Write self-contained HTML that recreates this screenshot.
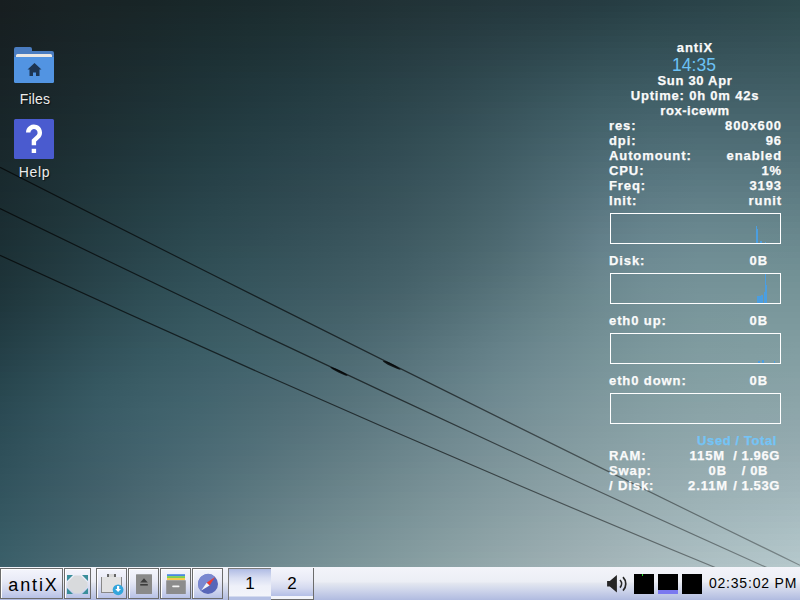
<!DOCTYPE html>
<html><head><meta charset="utf-8">
<style>
*{margin:0;padding:0;box-sizing:border-box}
html,body{width:800px;height:600px;overflow:hidden;background:#3a5560}
body{position:relative;font-family:"Liberation Sans",sans-serif}
#bg i{position:absolute;left:0;width:800px;height:6px;display:block}
.a{position:absolute}
.ck{position:absolute;color:#fafafa;-webkit-text-stroke:0.25px #fafafa;font-weight:bold;font-size:13px;letter-spacing:0.9px;line-height:15px;white-space:pre}
.r{text-align:right}
.c{text-align:center}
.gbox{position:absolute;left:610px;width:171px;height:31px;border:1px solid #fff}
.bar{position:absolute;background:#4b9ee0}
.dlabel{position:absolute;width:70px;text-align:center;color:#ececec;font-size:14px;letter-spacing:0.2px;line-height:16px;text-shadow:1px 1px 1px rgba(0,0,0,.6)}
#tb{position:absolute;left:0;top:567px;width:800px;height:33px;background:linear-gradient(180deg,#f3f4fa 0,#eceef5 15px,#e4e7f0 16px,#ccd3ea 24px,#b0bbe0 33px)}
.btn{position:absolute;top:1px;height:31px;border:1px solid #6c6c6c;box-shadow:inset 1px 1px 0 #fff;background:linear-gradient(180deg,#f4f5fc 0,#e8eaf6 12px,#d4d9ef 20px,#b4bfe6 30px)}
.ws{position:absolute;top:1px;height:32px;font-size:17px;line-height:20px;text-align:center;color:#000}
</style></head><body>
<div id="bg">
<i style="top:0px;background:linear-gradient(90deg,#171e20 0px,#182123 50px,#182325 100px,#182527 150px,#19282a 200px,#1a2a2d 250px,#1c2d30 300px,#1f2f33 350px,#213236 400px,#223439 450px,#24373c 500px,#25393f 550px,#263c42 600px,#284046 650px,#2a4349 700px,#2c464b 750px,#2e4a4e 800px)"></i>
<i style="top:6px;background:linear-gradient(90deg,#171e20 0px,#182123 50px,#182426 100px,#192628 150px,#19292b 200px,#1b2b2e 250px,#1d2e31 300px,#1f3034 350px,#213337 400px,#23363a 450px,#25383e 500px,#263b41 550px,#273e44 600px,#294248 650px,#2c454b 700px,#2e484d 750px,#2f4b4f 800px)"></i>
<i style="top:12px;background:linear-gradient(90deg,#171e21 0px,#182224 50px,#192426 100px,#192729 150px,#1a292c 200px,#1b2c2f 250px,#1d2f32 300px,#203135 350px,#223438 400px,#24373c 450px,#253a3f 500px,#273c42 550px,#284046 600px,#2b444a 650px,#2d474d 700px,#2f494f 750px,#304d51 800px)"></i>
<i style="top:18px;background:linear-gradient(90deg,#171f21 0px,#182224 50px,#192527 100px,#19272a 150px,#1a2a2d 200px,#1b2d30 250px,#1e3033 300px,#203236 350px,#23353a 400px,#25383d 450px,#263b41 500px,#283e44 550px,#2a4248 600px,#2c464c 650px,#2e484f 700px,#304b50 750px,#324e53 800px)"></i>
<i style="top:24px;background:linear-gradient(90deg,#171f22 0px,#182225 50px,#192528 100px,#19282b 150px,#1a2b2e 200px,#1c2e31 250px,#1e3134 300px,#213338 350px,#23363b 400px,#26393f 450px,#273d43 500px,#294046 550px,#2b444a 600px,#2e484e 650px,#304a51 700px,#324c52 750px,#334f54 800px)"></i>
<i style="top:30px;background:linear-gradient(90deg,#172022 0px,#182326 50px,#192628 100px,#1a292b 150px,#1b2c2f 200px,#1c2f32 250px,#1e3235 300px,#213439 350px,#24383c 400px,#263b40 450px,#293e44 500px,#2b4248 550px,#2d464c 600px,#2f4a50 650px,#314c52 700px,#334e54 750px,#345156 800px)"></i>
<i style="top:36px;background:linear-gradient(90deg,#172023 0px,#192326 50px,#192629 100px,#1a292c 150px,#1b2d30 200px,#1d3033 250px,#1f3337 300px,#22363a 350px,#25393e 400px,#273c42 450px,#2a4046 500px,#2c444a 550px,#2e484f 600px,#314c52 650px,#334e54 700px,#344f56 750px,#365258 800px)"></i>
<i style="top:42px;background:linear-gradient(90deg,#172023 0px,#192427 50px,#1a272a 100px,#1a2a2d 150px,#1b2d31 200px,#1d3034 250px,#1f3338 300px,#22373b 350px,#253a3f 400px,#283d43 450px,#2b4148 500px,#2d464c 550px,#304a51 600px,#324e54 650px,#345056 700px,#365158 750px,#375459 800px)"></i>
<i style="top:48px;background:linear-gradient(90deg,#172124 0px,#192427 50px,#1a272b 100px,#1b2b2e 150px,#1c2e32 200px,#1d3135 250px,#203439 300px,#23383d 350px,#263b40 400px,#293f45 450px,#2c4349 500px,#2e474e 550px,#314c53 600px,#345057 650px,#365158 700px,#37535a 750px,#38555b 800px)"></i>
<i style="top:54px;background:linear-gradient(90deg,#172124 0px,#192528 50px,#1a282b 100px,#1b2b2f 150px,#1c2f33 200px,#1e3236 250px,#20353a 300px,#23393e 350px,#273c42 400px,#2a4046 450px,#2d444b 500px,#304950 550px,#334e55 600px,#355159 650px,#37535a 700px,#39555c 750px,#3a575d 800px)"></i>
<i style="top:60px;background:linear-gradient(90deg,#172124 0px,#192528 50px,#1a292c 100px,#1b2c30 150px,#1c3034 200px,#1e3337 250px,#21363b 300px,#243a3f 350px,#273d43 400px,#2b4148 450px,#2e464d 500px,#314b52 550px,#345057 600px,#37535b 650px,#39555c 700px,#3a565d 750px,#3b585e 800px)"></i>
<i style="top:66px;background:linear-gradient(90deg,#172225 0px,#192629 50px,#1b292d 100px,#1c2d30 150px,#1d3135 200px,#1f3438 250px,#21373c 300px,#243b40 350px,#283e44 400px,#2b4349 450px,#2f484e 500px,#324d54 550px,#365259 600px,#38555d 650px,#3a575e 700px,#3c585f 750px,#3c5a60 800px)"></i>
<i style="top:72px;background:linear-gradient(90deg,#172225 0px,#192629 50px,#1b2a2d 100px,#1c2e31 150px,#1d3136 200px,#1f353a 250px,#22383d 300px,#253c41 350px,#293f46 400px,#2c444a 450px,#304950 500px,#344f56 550px,#37545b 600px,#3a575f 650px,#3c5960 700px,#3d5a61 750px,#3e5b62 800px)"></i>
<i style="top:78px;background:linear-gradient(90deg,#182326 0px,#1a272a 50px,#1b2a2e 100px,#1c2e32 150px,#1e3237 200px,#20363b 250px,#22393f 300px,#263d42 350px,#294147 400px,#2d454c 450px,#314b52 500px,#355058 550px,#39565d 600px,#3c5961 650px,#3e5b62 700px,#3f5b63 750px,#3f5d63 800px)"></i>
<i style="top:84px;background:linear-gradient(90deg,#182326 0px,#1a272b 50px,#1b2b2f 100px,#1d2f33 150px,#1e3337 200px,#20373c 250px,#233a40 300px,#263e44 350px,#2a4248 400px,#2e464d 450px,#324c53 500px,#37525a 550px,#3b5860 600px,#3d5b63 650px,#3f5c64 700px,#405d65 750px,#415e65 800px)"></i>
<i style="top:90px;background:linear-gradient(90deg,#182327 0px,#1a272b 50px,#1c2b2f 100px,#1d3034 150px,#1f3438 200px,#21373d 250px,#233b41 300px,#273f45 350px,#2b4349 400px,#2f484f 450px,#334e55 500px,#38545b 550px,#3c5a62 600px,#3f5d65 650px,#415e66 700px,#425f67 750px,#426067 800px)"></i>
<i style="top:96px;background:linear-gradient(90deg,#182427 0px,#1a282c 50px,#1c2c30 100px,#1d3035 150px,#1f3539 200px,#21383e 250px,#243c42 300px,#284046 350px,#2c444a 400px,#304950 450px,#344f56 500px,#39565d 550px,#3e5c64 600px,#415f67 650px,#436068 700px,#436169 750px,#446168 800px)"></i>
<i style="top:102px;background:linear-gradient(90deg,#182428 0px,#1a282c 50px,#1c2d31 100px,#1e3136 150px,#1f353a 200px,#22393f 250px,#253d43 300px,#284047 350px,#2c454c 400px,#314a51 450px,#365058 500px,#3b575f 550px,#3f5d65 600px,#426169 650px,#44626a 700px,#45626a 750px,#45636a 800px)"></i>
<i style="top:108px;background:linear-gradient(90deg,#182528 0px,#1a292d 50px,#1c2d31 100px,#1e3237 150px,#20363b 200px,#223a40 250px,#253e44 300px,#294148 350px,#2d464d 400px,#324b52 450px,#375259 500px,#3c5961 550px,#415f67 600px,#44626b 650px,#46646c 700px,#46646c 750px,#47646c 800px)"></i>
<i style="top:114px;background:linear-gradient(90deg,#182529 0px,#1b2a2d 50px,#1d2e32 100px,#1e3337 150px,#20373c 200px,#233b41 250px,#263e45 300px,#2a4249 350px,#2e474e 400px,#324c54 450px,#38535b 500px,#3d5a62 550px,#426169 600px,#46646d 650px,#48666e 700px,#48666e 750px,#48666d 800px)"></i>
<i style="top:120px;background:linear-gradient(90deg,#182629 0px,#1b2a2e 50px,#1d2f33 100px,#1f3438 150px,#21383d 200px,#233c42 250px,#263f46 300px,#2a434a 350px,#2f484f 400px,#334d55 450px,#39545c 500px,#3f5c64 550px,#44626b 600px,#48666f 650px,#496770 700px,#4a6770 750px,#4a676f 800px)"></i>
<i style="top:126px;background:linear-gradient(90deg,#18262a 0px,#1b2b2f 50px,#1d2f34 100px,#1f3439 150px,#21393e 200px,#243d43 250px,#274047 300px,#2b444b 350px,#2f4950 400px,#344f56 450px,#3a555d 500px,#405d65 550px,#45646c 600px,#496870 650px,#4b6972 700px,#4b6972 750px,#4b6971 800px)"></i>
<i style="top:132px;background:linear-gradient(90deg,#18262a 0px,#1b2b2f 50px,#1e3035 100px,#20353a 150px,#223a3f 200px,#253e44 250px,#284148 300px,#2c454c 350px,#304a51 400px,#355057 450px,#3b575e 500px,#415e67 550px,#47656e 600px,#4b6a72 650px,#4d6b74 700px,#4d6b73 750px,#4d6b72 800px)"></i>
<i style="top:138px;background:linear-gradient(90deg,#19272b 0px,#1b2c30 50px,#1e3135 100px,#20363b 150px,#223b40 200px,#253e45 250px,#294249 300px,#2c464d 350px,#314b52 400px,#365158 450px,#3c5860 500px,#436068 550px,#496770 600px,#4d6b74 650px,#4f6d76 700px,#4f6d75 750px,#4e6c74 800px)"></i>
<i style="top:144px;background:linear-gradient(90deg,#19272b 0px,#1c2c31 50px,#1e3136 100px,#20373c 150px,#233c41 200px,#263f46 250px,#29434a 300px,#2d474e 350px,#324c53 400px,#375259 450px,#3d5961 500px,#44616a 550px,#4a6871 600px,#4e6d76 650px,#506f77 700px,#506e77 750px,#506e76 800px)"></i>
<i style="top:150px;background:linear-gradient(90deg,#19282c 0px,#1c2d31 50px,#1e3237 100px,#21373d 150px,#233c42 200px,#264047 250px,#2a444b 300px,#2e484f 350px,#324c54 400px,#38535a 450px,#3e5a62 500px,#45626b 550px,#4c6a73 600px,#506f78 650px,#527179 700px,#527079 750px,#517077 800px)"></i>
<i style="top:156px;background:linear-gradient(90deg,#19282c 0px,#1c2e32 50px,#1f3338 100px,#21383e 150px,#243d43 200px,#274148 250px,#2b444c 300px,#2f4850 350px,#334d55 400px,#39545b 450px,#3f5b63 500px,#47646c 550px,#4d6b75 600px,#52707a 650px,#54727b 700px,#54727a 750px,#537179 800px)"></i>
<i style="top:162px;background:linear-gradient(90deg,#19292d 0px,#1c2e33 50px,#1f3439 100px,#22393f 150px,#243e44 200px,#284249 250px,#2c454d 300px,#2f4951 350px,#344e56 400px,#39555c 450px,#405c64 500px,#48656e 550px,#4f6d76 600px,#54727b 650px,#56747d 700px,#56747c 750px,#55737b 800px)"></i>
<i style="top:168px;background:linear-gradient(90deg,#19292d 0px,#1c2f33 50px,#1f3439 100px,#223a40 150px,#253f45 200px,#28434a 250px,#2c464e 300px,#304a52 350px,#354f57 400px,#3a555d 450px,#415d65 500px,#49666f 550px,#516e78 600px,#56747d 650px,#58767f 700px,#57767e 750px,#57757c 800px)"></i>
<i style="top:174px;background:linear-gradient(90deg,#192a2e 0px,#1d2f34 50px,#20353a 100px,#233b40 150px,#264046 200px,#29434b 250px,#2d474e 300px,#314b53 350px,#365058 400px,#3b565e 450px,#425e66 500px,#4a6770 550px,#527079 600px,#57767f 650px,#597881 700px,#597880 750px,#58777e 800px)"></i>
<i style="top:180px;background:linear-gradient(90deg,#192a2e 0px,#1d3035 50px,#20363b 100px,#233b41 150px,#264047 200px,#2a444b 250px,#2e484f 300px,#324c54 350px,#365159 400px,#3c575f 450px,#435f67 500px,#4c6972 550px,#54717b 600px,#597781 650px,#5b7a82 700px,#5b7981 750px,#5a7880 800px)"></i>
<i style="top:186px;background:linear-gradient(90deg,#192a2f 0px,#1d3035 50px,#21373c 100px,#243c42 150px,#274148 200px,#2b454c 250px,#2f4850 300px,#334d54 350px,#375259 400px,#3d5860 450px,#446068 500px,#4d6a73 550px,#55737d 600px,#5b7982 650px,#5d7b84 700px,#5d7b83 750px,#5c7a82 800px)"></i>
<i style="top:192px;background:linear-gradient(90deg,#1a2b2f 0px,#1d3136 50px,#21373d 100px,#243d43 150px,#284249 200px,#2b464d 250px,#2f4951 300px,#334d55 350px,#38535a 400px,#3e5961 450px,#456169 500px,#4e6b74 550px,#57747e 600px,#5d7b84 650px,#5f7d86 700px,#5f7d85 750px,#5e7c83 800px)"></i>
<i style="top:198px;background:linear-gradient(90deg,#1a2b30 0px,#1e3237 50px,#21383e 100px,#253e44 150px,#28434a 200px,#2c474e 250px,#304a52 300px,#344e56 350px,#39535b 400px,#3f5a62 450px,#46626a 500px,#506c75 550px,#597680 600px,#5f7c86 650px,#617f87 700px,#607f86 750px,#5f7e85 800px)"></i>
<i style="top:204px;background:linear-gradient(90deg,#1a2c30 0px,#1e3237 50px,#22393e 100px,#253f45 150px,#29444b 200px,#2d484f 250px,#314b53 300px,#354f57 350px,#3a545c 400px,#405b63 450px,#47636b 500px,#516d77 550px,#5a7781 600px,#607e87 650px,#638189 700px,#628188 750px,#618086 800px)"></i>
<i style="top:210px;background:linear-gradient(90deg,#1a2c31 0px,#1e3338 50px,#223a3f 100px,#264046 150px,#29454c 200px,#2d4950 250px,#314c54 300px,#365058 350px,#3a555d 400px,#405c63 450px,#48646c 500px,#526f78 550px,#5c7983 600px,#628089 650px,#64838b 700px,#64828a 750px,#638188 800px)"></i>
<i style="top:216px;background:linear-gradient(90deg,#1a2d32 0px,#1f3439 50px,#233a40 100px,#264147 150px,#2a464d 200px,#2e4a51 250px,#324d55 300px,#365159 350px,#3b565e 400px,#415d64 450px,#49656d 500px,#537079 550px,#5e7a84 600px,#64818a 650px,#66848c 700px,#66848b 750px,#648389 800px)"></i>
<i style="top:222px;background:linear-gradient(90deg,#1b2d32 0px,#1f3439 50px,#233b41 100px,#274148 150px,#2b474e 200px,#2f4a52 250px,#334e56 300px,#37525a 350px,#3c575f 400px,#425e65 450px,#4a666e 500px,#55717a 550px,#5f7c86 600px,#65838c 650px,#68868e 700px,#67868d 750px,#66858b 800px)"></i>
<i style="top:228px;background:linear-gradient(90deg,#1b2e33 0px,#1f353a 50px,#233c42 100px,#284249 150px,#2b484f 200px,#2f4b53 250px,#344f57 300px,#38535b 350px,#3d5860 400px,#435f66 450px,#4b676f 500px,#56727b 550px,#617d87 600px,#67848d 650px,#69878f 700px,#69878e 750px,#68868c 800px)"></i>
<i style="top:234px;background:linear-gradient(90deg,#1b2e33 0px,#20363b 50px,#243d43 100px,#28434a 150px,#2c4950 200px,#304c54 250px,#345058 300px,#39545c 350px,#3e5961 400px,#446067 450px,#4c6870 500px,#57737c 550px,#627f89 600px,#68868f 650px,#6b8990 700px,#6a898f 750px,#69888e 800px)"></i>
<i style="top:240px;background:linear-gradient(90deg,#1b2f34 0px,#20363c 50px,#243e44 100px,#29444b 150px,#2d4a51 200px,#314d55 250px,#355159 300px,#39555d 350px,#3f5a62 400px,#456168 450px,#4d6971 500px,#58747d 550px,#64808a 600px,#6a8790 650px,#6c8a91 700px,#6c8a91 750px,#6b898f 800px)"></i>
<i style="top:246px;background:linear-gradient(90deg,#1b3035 0px,#20373d 50px,#253e45 100px,#29454c 150px,#2e4b52 200px,#324f56 250px,#36525a 300px,#3a565e 350px,#3f5b63 400px,#466269 450px,#4e6a72 500px,#59757e 550px,#65818b 600px,#6b8891 650px,#6e8b93 700px,#6d8c92 750px,#6c8b90 800px)"></i>
<i style="top:252px;background:linear-gradient(90deg,#1c3035 0px,#21383d 50px,#263f46 100px,#2a464d 150px,#2e4c53 200px,#325057 250px,#37535b 300px,#3b575f 350px,#405c64 400px,#47636b 450px,#506c73 500px,#5b777f 550px,#66838c 600px,#6c8992 650px,#6f8d94 700px,#6f8d93 750px,#6e8c92 800px)"></i>
<i style="top:258px;background:linear-gradient(90deg,#1c3136 0px,#21383e 50px,#264047 100px,#2b474e 150px,#2f4d54 200px,#335159 250px,#37545c 300px,#3c5860 350px,#415d65 400px,#48646c 450px,#516d74 500px,#5c7880 550px,#68848d 600px,#6e8b93 650px,#708e95 700px,#708e94 750px,#6f8e93 800px)"></i>
<i style="top:264px;background:linear-gradient(90deg,#1c3137 0px,#22393f 50px,#274148 100px,#2b484f 150px,#304e55 200px,#34525a 250px,#38555d 300px,#3d5961 350px,#425e66 400px,#49656d 450px,#526e76 500px,#5d7981 550px,#69858d 600px,#6f8c94 650px,#718f96 700px,#719095 750px,#718f94 800px)"></i>
<i style="top:270px;background:linear-gradient(90deg,#1d3237 0px,#223a40 50px,#274249 100px,#2c4951 150px,#304f57 200px,#35535b 250px,#39565e 300px,#3e5a62 350px,#435f67 400px,#4b666e 450px,#536f77 500px,#5e7a82 550px,#6a868e 600px,#708d94 650px,#729096 700px,#739196 750px,#729195 800px)"></i>
<i style="top:276px;background:linear-gradient(90deg,#1d3338 0px,#233b41 50px,#28434a 100px,#2d4a52 150px,#315058 200px,#36545c 250px,#3a575f 300px,#3f5b63 350px,#446068 400px,#4c686f 450px,#557178 500px,#607c83 550px,#6b878f 600px,#718e95 650px,#749197 700px,#749297 750px,#739296 800px)"></i>
<i style="top:282px;background:linear-gradient(90deg,#1d3339 0px,#233c42 50px,#29444b 100px,#2d4c53 150px,#325159 200px,#36555d 250px,#3b5860 300px,#3f5c64 350px,#456169 400px,#4d6971 450px,#56727a 500px,#617d84 550px,#6c888f 600px,#728f96 650px,#759298 700px,#759398 750px,#759397 800px)"></i>
<i style="top:288px;background:linear-gradient(90deg,#1e343a 0px,#243d43 50px,#29454c 100px,#2e4d54 150px,#33525a 200px,#37565e 250px,#3c5962 300px,#405d65 350px,#46626a 400px,#4e6a72 450px,#58747b 500px,#627e85 550px,#6c8990 600px,#739096 650px,#769399 700px,#769499 750px,#769498 800px)"></i>
<i style="top:294px;background:linear-gradient(90deg,#1e353b 0px,#243e44 50px,#2a464e 100px,#2f4e55 150px,#34535b 200px,#38575f 250px,#3d5a63 300px,#425e66 350px,#48636b 400px,#506c73 450px,#59757d 500px,#648086 550px,#6d8a90 600px,#749097 650px,#77949a 700px,#78959a 750px,#779599 800px)"></i>
<i style="top:300px;background:linear-gradient(90deg,#1f363c 0px,#253f45 50px,#2b474f 100px,#304f57 150px,#34545d 200px,#395861 250px,#3e5c64 300px,#435f68 350px,#49656d 400px,#516d75 450px,#5b777e 500px,#658187 550px,#6e8b91 600px,#759197 650px,#78959a 700px,#79969b 750px,#79969a 800px)"></i>
<i style="top:306px;background:linear-gradient(90deg,#1f373d 0px,#264047 50px,#2b4950 100px,#315058 150px,#35565e 200px,#3a5962 250px,#3f5d65 300px,#446169 350px,#4a666e 400px,#526f76 450px,#5c7880 500px,#668288 550px,#6f8b92 600px,#769298 650px,#79969b 700px,#7a979c 750px,#7a979b 800px)"></i>
<i style="top:312px;background:linear-gradient(90deg,#20383f 0px,#264148 50px,#2c4a51 100px,#315159 150px,#36575f 200px,#3b5a63 250px,#405e66 300px,#45626a 350px,#4b6870 400px,#547078 450px,#5e7a81 500px,#67838a 550px,#708c92 600px,#779399 650px,#7a979c 700px,#7b989d 750px,#7b989c 800px)"></i>
<i style="top:318px;background:linear-gradient(90deg,#213940 0px,#274249 50px,#2d4b53 100px,#32525a 150px,#375860 200px,#3c5b64 250px,#415f67 300px,#46636b 350px,#4d6971 400px,#557179 450px,#5f7b83 500px,#69858b 550px,#718d93 600px,#779499 650px,#7b989c 700px,#7c999d 750px,#7c999d 800px)"></i>
<i style="top:324px;background:linear-gradient(90deg,#213a41 0px,#28434b 50px,#2e4c54 100px,#33535c 150px,#385961 200px,#3d5c65 250px,#426069 300px,#47646d 350px,#4e6a73 400px,#57737b 450px,#607d84 500px,#6a868c 550px,#728e94 600px,#78959a 650px,#7c989d 700px,#7d9a9e 750px,#7d9a9e 800px)"></i>
<i style="top:330px;background:linear-gradient(90deg,#223c43 0px,#28454c 50px,#2f4d55 100px,#34545d 150px,#395a62 200px,#3e5e66 250px,#43616a 300px,#49666e 350px,#506c74 400px,#58747c 450px,#627e86 500px,#6b878d 550px,#738f95 600px,#79959b 650px,#7d999e 700px,#7e9b9f 750px,#7f9b9f 800px)"></i>
<i style="top:336px;background:linear-gradient(90deg,#223d44 0px,#29464e 50px,#2f4f57 100px,#35555e 150px,#3a5b63 200px,#3f5f67 250px,#44626b 300px,#4a676f 350px,#516d76 400px,#5a767e 450px,#637f87 500px,#6c888f 550px,#749096 600px,#7a969b 650px,#7e9a9f 700px,#7f9ca0 750px,#809ca0 800px)"></i>
<i style="top:342px;background:linear-gradient(90deg,#233e45 0px,#2a474f 50px,#305058 100px,#36575f 150px,#3a5c64 200px,#3f6068 250px,#45636c 300px,#4b6871 350px,#526f77 400px,#5b777f 450px,#658189 500px,#6e8990 550px,#759197 600px,#7b979c 650px,#7f9b9f 700px,#809ca0 750px,#819da1 800px)"></i>
<i style="top:348px;background:linear-gradient(90deg,#243f47 0px,#2b4850 50px,#31515a 100px,#365861 150px,#3b5d66 200px,#406169 250px,#46656d 300px,#4c6972 350px,#547078 400px,#5d7981 450px,#66828a 500px,#6f8a91 550px,#769297 600px,#7c989d 650px,#809ca0 700px,#819da1 750px,#829ea2 800px)"></i>
<i style="top:354px;background:linear-gradient(90deg,#244048 0px,#2b4952 50px,#32525b 100px,#375962 150px,#3c5e67 200px,#41626b 250px,#47666e 300px,#4e6b73 350px,#55717a 400px,#5e7a82 450px,#67838b 500px,#708b92 550px,#779398 600px,#7d999d 650px,#819ca1 700px,#829ea2 750px,#839fa3 800px)"></i>
<i style="top:360px;background:linear-gradient(90deg,#254149 0px,#2c4b53 50px,#33535c 100px,#385a63 150px,#3d5f68 200px,#42636c 250px,#48676f 300px,#4f6c74 350px,#57737b 400px,#5f7b83 450px,#69848c 500px,#718c93 550px,#789499 600px,#7e999e 650px,#819da1 700px,#839fa3 750px,#849fa3 800px)"></i>
<i style="top:366px;background:linear-gradient(90deg,#26424b 0px,#2d4c54 50px,#34545e 100px,#395b64 150px,#3e5f69 200px,#43646d 250px,#496871 300px,#506d76 350px,#58747c 400px,#617c85 450px,#6a858d 500px,#728d94 550px,#79949a 600px,#7f9a9f 650px,#829ea2 700px,#84a0a3 750px,#85a0a4 800px)"></i>
<i style="top:372px;background:linear-gradient(90deg,#26444c 0px,#2e4d56 50px,#34565f 100px,#3a5c65 150px,#3f606a 200px,#44656e 250px,#4b6972 300px,#526e77 350px,#59757e 400px,#627e86 450px,#6b878e 500px,#738e95 550px,#7a959b 600px,#809ba0 650px,#839fa3 700px,#85a0a4 750px,#86a1a5 800px)"></i>
<i style="top:378px;background:linear-gradient(90deg,#27454d 0px,#2e4e57 50px,#355760 100px,#3b5d66 150px,#40616b 200px,#45656f 250px,#4c6a73 300px,#537078 350px,#5b777f 400px,#637f87 450px,#6c888f 500px,#758f96 550px,#7b969b 600px,#819ca0 650px,#849fa3 700px,#86a1a5 750px,#88a2a6 800px)"></i>
<i style="top:384px;background:linear-gradient(90deg,#28464e 0px,#2f4f58 50px,#365861 100px,#3c5e67 150px,#41626c 200px,#476670 250px,#4d6b74 300px,#547179 350px,#5c7880 400px,#658088 450px,#6e8990 500px,#769097 550px,#7c979c 600px,#829da1 650px,#85a0a4 700px,#87a2a6 750px,#89a2a7 800px)"></i>
<i style="top:390px;background:linear-gradient(90deg,#28474f 0px,#305059 50px,#375963 100px,#3c5e68 150px,#42636d 200px,#486771 250px,#4e6c75 300px,#55727a 350px,#5d7981 400px,#668189 450px,#6f8a91 500px,#779197 550px,#7e989d 600px,#839da2 650px,#86a1a5 700px,#88a2a6 750px,#8aa3a7 800px)"></i>
<i style="top:396px;background:linear-gradient(90deg,#294851 0px,#31515a 50px,#385a64 100px,#3d5f69 150px,#42646e 200px,#496871 250px,#4f6d76 300px,#57737b 350px,#5f7a82 400px,#67828a 450px,#708a92 500px,#789298 550px,#7f989e 600px,#849ea2 650px,#87a2a6 700px,#8aa3a7 750px,#8ba4a8 800px)"></i>
<i style="top:402px;background:linear-gradient(90deg,#2a4952 0px,#31525b 50px,#385a64 100px,#3e606a 150px,#43656e 200px,#4a6972 250px,#516e77 300px,#58747c 350px,#607c83 400px,#69838b 450px,#718b93 500px,#799399 550px,#80999e 600px,#859fa3 650px,#89a2a6 700px,#8ba4a8 750px,#8ca5a9 800px)"></i>
<i style="top:408px;background:linear-gradient(90deg,#2a4953 0px,#32535c 50px,#395b65 100px,#3f616b 150px,#44656f 200px,#4b6a73 250px,#526f78 300px,#59757e 350px,#627d84 400px,#6a858c 450px,#738c93 500px,#7a949a 550px,#819a9f 600px,#869fa4 650px,#8aa3a7 700px,#8ca5a9 750px,#8da6aa 800px)"></i>
<i style="top:414px;background:linear-gradient(90deg,#2b4a54 0px,#33535d 50px,#3a5b66 100px,#3f616b 150px,#456670 200px,#4c6b74 250px,#537079 300px,#5b777f 350px,#637e86 400px,#6b868d 450px,#748d94 500px,#7b949a 550px,#829ba0 600px,#87a0a5 650px,#8ba4a8 700px,#8da5aa 750px,#8ea6ab 800px)"></i>
<i style="top:420px;background:linear-gradient(90deg,#2b4b55 0px,#33545e 50px,#3a5c66 100px,#40626c 150px,#466771 200px,#4d6c75 250px,#54717a 300px,#5c7880 350px,#647f87 400px,#6d878e 450px,#758e95 500px,#7c959b 550px,#839ba1 600px,#88a1a5 650px,#8ca5a9 700px,#8ea6ab 750px,#90a7ac 800px)"></i>
<i style="top:426px;background:linear-gradient(90deg,#2c4c55 0px,#34545e 50px,#3b5c67 100px,#41626d 150px,#476871 200px,#4e6d76 250px,#56727b 300px,#5d7981 350px,#668088 400px,#6e888f 450px,#768f96 500px,#7e969c 550px,#849ca1 600px,#89a2a6 650px,#8da5aa 700px,#8fa7ab 750px,#91a8ad 800px)"></i>
<i style="top:432px;background:linear-gradient(90deg,#2c4d56 0px,#34555f 50px,#3c5d67 100px,#42636d 150px,#486872 200px,#4f6e77 250px,#57737c 300px,#5f7a82 350px,#678189 400px,#6f8990 450px,#779097 500px,#7f979d 550px,#859da2 600px,#8aa3a7 650px,#8ea6aa 700px,#90a8ac 750px,#92a9ae 800px)"></i>
<i style="top:438px;background:linear-gradient(90deg,#2d4d57 0px,#355660 50px,#3c5d67 100px,#42636e 150px,#496973 200px,#506f78 250px,#58747d 300px,#607b83 350px,#68838a 400px,#718a91 450px,#799198 500px,#80989e 550px,#869ea3 600px,#8ba3a8 650px,#8fa7ab 700px,#91a9ad 750px,#93aaaf 800px)"></i>
<i style="top:444px;background:linear-gradient(90deg,#2e4e58 0px,#365660 50px,#3d5d68 100px,#43646e 150px,#4a6a74 200px,#516f79 250px,#59767e 300px,#617c84 350px,#6a848b 400px,#728b92 450px,#7a9299 500px,#81999e 550px,#879fa4 600px,#8da4a9 650px,#90a8ac 700px,#93aaae 750px,#95abb0 800px)"></i>
<i style="top:450px;background:linear-gradient(90deg,#2e4f59 0px,#365761 50px,#3e5e68 100px,#44646f 150px,#4b6a74 200px,#527079 250px,#5b777f 300px,#637e85 350px,#6b858c 400px,#738c93 450px,#7b9399 500px,#829a9f 550px,#89a0a5 600px,#8ea5aa 650px,#92a9ad 700px,#94abaf 750px,#96acb1 800px)"></i>
<i style="top:456px;background:linear-gradient(90deg,#2f505a 0px,#375761 50px,#3e5e69 100px,#45656f 150px,#4c6b75 200px,#54717a 250px,#5c7880 300px,#647f86 350px,#6c868d 400px,#758d94 450px,#7d949a 500px,#849ba0 550px,#8aa1a5 600px,#8fa6ab 650px,#93aaae 700px,#95acb0 750px,#98adb2 800px)"></i>
<i style="top:462px;background:linear-gradient(90deg,#2f505a 0px,#375862 50px,#3f5f69 100px,#466570 150px,#4d6c76 200px,#55727b 250px,#5d7981 300px,#668087 350px,#6e878e 400px,#768f95 450px,#7e959b 500px,#859ca1 550px,#8ba2a6 600px,#90a7ab 650px,#94abaf 700px,#97adb2 750px,#99afb4 800px)"></i>
<i style="top:468px;background:linear-gradient(90deg,#30515b 0px,#385863 50px,#405f69 100px,#476670 150px,#4e6d76 200px,#56737c 250px,#5f7a82 300px,#678188 350px,#6f898f 400px,#779096 450px,#7f979c 500px,#869da2 550px,#8da3a7 600px,#92a8ad 650px,#96acb0 700px,#98aeb3 750px,#9bb0b5 800px)"></i>
<i style="top:474px;background:linear-gradient(90deg,#31525c 0px,#395963 50px,#405f6a 100px,#486771 150px,#4f6e77 200px,#57757d 250px,#607b83 300px,#688389 350px,#718a90 400px,#799197 450px,#80989d 500px,#889ea3 550px,#8ea4a9 600px,#93a9ae 650px,#97adb1 700px,#9aafb4 750px,#9cb1b6 800px)"></i>
<i style="top:480px;background:linear-gradient(90deg,#31535d 0px,#395964 50px,#41606a 100px,#496771 150px,#506e78 200px,#59767e 250px,#617d84 300px,#6a848a 350px,#728b91 400px,#7a9298 450px,#82999e 500px,#899fa4 550px,#8fa5aa 600px,#95aaaf 650px,#98aeb3 700px,#9bb1b5 750px,#9eb3b8 800px)"></i>
<i style="top:486px;background:linear-gradient(90deg,#32535e 0px,#3a5a64 50px,#42606b 100px,#4a6872 150px,#516f79 200px,#5a777f 250px,#637e85 300px,#6b858c 350px,#738c92 400px,#7b9399 450px,#839a9f 500px,#8aa0a5 550px,#91a6ab 600px,#96acb0 650px,#9aafb4 700px,#9db2b7 750px,#9fb4b9 800px)"></i>
<i style="top:492px;background:linear-gradient(90deg,#32545e 0px,#3b5b65 50px,#43616b 100px,#4b6972 150px,#53707a 200px,#5b7880 250px,#647f86 300px,#6c868d 350px,#758e93 400px,#7d949a 450px,#849ba0 500px,#8ca1a6 550px,#92a7ac 600px,#97adb1 650px,#9bb1b5 700px,#9eb4b8 750px,#a1b6bb 800px)"></i>
<i style="top:498px;background:linear-gradient(90deg,#33555f 0px,#3b5c66 50px,#44626c 100px,#4c6973 150px,#54717a 200px,#5d7981 250px,#668088 300px,#6e888e 350px,#768f94 400px,#7e969b 450px,#869ca1 500px,#8da2a7 550px,#94a8ad 600px,#99aeb2 650px,#9db2b6 700px,#a0b5b9 750px,#a3b8bc 800px)"></i>
<i style="top:504px;background:linear-gradient(90deg,#345660 0px,#3c5c67 50px,#44636d 100px,#4d6a74 150px,#55727b 200px,#5e7a82 250px,#678289 300px,#6f898f 350px,#779095 400px,#7f979c 450px,#879da2 500px,#8ea3a8 550px,#95aaae 600px,#9aafb3 650px,#9eb3b7 700px,#a1b6bb 750px,#a4b9be 800px)"></i>
<i style="top:510px;background:linear-gradient(90deg,#345761 0px,#3d5d67 50px,#45646d 100px,#4e6b75 150px,#56737c 200px,#5f7b83 250px,#68838a 300px,#718a90 350px,#799196 400px,#81989d 450px,#889ea3 500px,#90a4a9 550px,#96abaf 600px,#9cb0b4 650px,#a0b5b9 700px,#a3b8bc 750px,#a6bbbf 800px)"></i>
<i style="top:516px;background:linear-gradient(90deg,#355862 0px,#3e5e68 50px,#46656e 100px,#4f6c76 150px,#58747d 200px,#617d84 250px,#6a848b 300px,#728c91 350px,#7a9398 400px,#82999e 450px,#8aa0a4 500px,#91a6aa 550px,#98acb0 600px,#9db1b6 650px,#a1b6ba 700px,#a5b9be 750px,#a8bcc1 800px)"></i>
<i style="top:522px;background:linear-gradient(90deg,#365963 0px,#3e5f69 50px,#47666f 100px,#506d77 150px,#59757e 200px,#627e85 250px,#6b868c 300px,#738d93 350px,#7b9499 400px,#839a9f 450px,#8ba1a5 500px,#93a7ab 550px,#99adb1 600px,#9fb3b7 650px,#a3b7bb 700px,#a6bbbf 750px,#aabec2 800px)"></i>
<i style="top:528px;background:linear-gradient(90deg,#365a64 0px,#3f606a 50px,#486770 100px,#516e78 150px,#5a777f 200px,#637f87 250px,#6d878d 300px,#758e94 350px,#7d959a 400px,#859ca0 450px,#8da2a6 500px,#94a8ac 550px,#9baeb2 600px,#a0b4b8 650px,#a4b8bc 700px,#a8bcc0 750px,#abc0c4 800px)"></i>
<i style="top:534px;background:linear-gradient(90deg,#375b65 0px,#40616b 50px,#496871 100px,#526f79 150px,#5b7880 200px,#658088 250px,#6e888f 300px,#769095 350px,#7e969b 400px,#869da1 450px,#8ea3a7 500px,#95a9ad 550px,#9cafb3 600px,#a2b5b9 650px,#a6babe 700px,#aabec2 750px,#adc1c5 800px)"></i>
<i style="top:540px;background:linear-gradient(90deg,#385c66 0px,#41626c 50px,#4a6972 100px,#53707a 150px,#5d7981 200px,#668189 250px,#6f8a90 300px,#789196 350px,#80989c 400px,#889ea2 450px,#8fa4a8 500px,#97aaae 550px,#9db0b4 600px,#a3b6ba 650px,#a7bbbf 700px,#abbfc3 750px,#afc3c7 800px)"></i>
<i style="top:546px;background:linear-gradient(90deg,#395d67 0px,#42636d 50px,#4b6a73 100px,#54727b 150px,#5e7a82 200px,#67838a 250px,#718b91 300px,#799297 350px,#81999d 400px,#899fa3 450px,#91a5a9 500px,#98abaf 550px,#9fb1b5 600px,#a5b7bb 650px,#a9bcc0 700px,#adc1c4 750px,#b1c4c8 800px)"></i>
<i style="top:552px;background:linear-gradient(90deg,#395e68 0px,#43646e 50px,#4c6b74 100px,#55737c 150px,#5f7b83 200px,#69848b 250px,#728c92 300px,#7a9398 350px,#829a9e 400px,#8aa1a4 450px,#92a7aa 500px,#9aacb0 550px,#a0b2b6 600px,#a6b8bc 650px,#abbec1 700px,#afc2c6 750px,#b2c6ca 800px)"></i>
<i style="top:558px;background:linear-gradient(90deg,#3a5e68 0px,#44656f 50px,#4d6c76 100px,#56747d 150px,#607c84 200px,#6a858c 250px,#738d93 300px,#7c9599 350px,#849b9f 400px,#8ca2a5 450px,#94a8ac 500px,#9baeb1 550px,#a2b3b7 600px,#a7babd 650px,#acbfc3 700px,#b0c3c7 750px,#b4c7cb 800px)"></i>
<i style="top:564px;background:linear-gradient(90deg,#3b5f69 0px,#446670 50px,#4e6d77 100px,#58757e 150px,#617e85 200px,#6b868d 250px,#758f94 300px,#7d969b 350px,#859da0 400px,#8da3a7 450px,#95a9ad 500px,#9cafb3 550px,#a3b5b8 600px,#a9bbbe 650px,#aec0c4 700px,#b2c5c8 750px,#b6c9cc 800px)"></i>
</div>
<svg class="a" style="left:0;top:0" width="800" height="600">
<defs><linearGradient id="lg" gradientUnits="userSpaceOnUse" x1="0" y1="0" x2="800" y2="0"><stop offset="0" stop-color="#000" stop-opacity="0.68"/><stop offset="0.55" stop-color="#000" stop-opacity="0.6"/><stop offset="1" stop-color="#000" stop-opacity="0.32"/></linearGradient></defs>
<g stroke="url(#lg)" stroke-width="1.2" fill="none">
<path d="M0 167.3 Q400 370.6 800 565.3"/>
<path d="M0 208.6 Q400 403.4 800 582.5"/>
<path d="M0 255.4 Q400 439.4 800 602.4"/>
</g>
<g fill="#000" fill-opacity="0.8">
<ellipse cx="391.7" cy="365.2" rx="9.8" ry="1.3" transform="rotate(25.8 391.7 365.2)"/>
<ellipse cx="339" cy="371.4" rx="9.5" ry="1.3" transform="rotate(26 339 371.4)"/>
</g>
</svg>
<!-- desktop icons -->
<svg class="a" style="left:0;top:0" width="80" height="200">
<path d="M14 49 Q14 47 16 47 L30 47 Q32 47 32 49 L32 51 L52 51 Q54 51 54 53 L54 60 L14 60 Z" fill="#4a7cc0"/>
<path d="M16 60 L16 55.5 Q16 54 17.5 54 L50.5 54 Q52 54 52 55.5 L52 60 Z" fill="#ece8e4"/>
<path d="M14 57 L54 57 L54 81.5 Q54 83 52.5 83 L15.5 83 Q14 83 14 81.5 Z" fill="#5294e2"/>
<path d="M34.5 63 L41.5 69.5 L39.5 69.5 L39.5 76 L36 76 L36 72.5 L33 72.5 L33 76 L29.5 76 L29.5 69.5 L27.5 69.5 Z" fill="#1d3552"/>
<rect x="14" y="119" width="40" height="40" rx="1.5" fill="#4a5bcf"/>
<path d="M28.2 132.6 A5.8 5.8 0 1 1 38.5 136.3 L33.9 140.6 L33.9 145.3" stroke="#fff" stroke-width="4.4" fill="none"/><rect x="31.7" y="148.8" width="4.4" height="4.2" fill="#fff"/>
</svg>
<div class="dlabel" style="left:0px;top:90.5px">Files</div>
<div class="dlabel" style="left:-0.5px;top:164px;letter-spacing:0.7px">Help</div>
<!-- conky -->
<div class="ck c " style="top:40px;left:595px;width:200px;">antiX</div>
<div class="a" style="top:55px;left:594px;width:200px;text-align:center;font-size:17.5px;line-height:20px;color:#6cc2f6;white-space:pre">14:35</div>
<div class="ck c " style="top:73px;left:595px;width:200px;letter-spacing:0.7px">Sun 30 Apr</div>
<div class="ck c " style="top:88px;left:595px;width:200px;letter-spacing:0.8px">Uptime: 0h 0m 42s</div>
<div class="ck c " style="top:103px;left:595px;width:200px;letter-spacing:0.55px">rox-icewm</div>
<div class="ck " style="top:118px;left:609px;">res:</div>
<div class="ck r " style="top:118px;left:582px;width:200px;">800x600</div>
<div class="ck " style="top:133px;left:609px;">dpi:</div>
<div class="ck r " style="top:133px;left:582px;width:200px;">96</div>
<div class="ck " style="top:148px;left:609px;">Automount:</div>
<div class="ck r " style="top:148px;left:582px;width:200px;">enabled</div>
<div class="ck " style="top:163px;left:609px;">CPU:</div>
<div class="ck r " style="top:163px;left:582px;width:200px;">1%</div>
<div class="ck " style="top:178px;left:609px;">Freq:</div>
<div class="ck r " style="top:178px;left:582px;width:200px;">3193</div>
<div class="ck " style="top:193px;left:609px;">Init:</div>
<div class="ck r " style="top:193px;left:582px;width:200px;">runit</div>
<div class="ck " style="top:253px;left:609px;">Disk:</div>
<div class="ck r " style="top:253px;left:568px;width:200px;">0B</div>
<div class="ck " style="top:313px;left:609px;">eth0 up:</div>
<div class="ck r " style="top:313px;left:568px;width:200px;">0B</div>
<div class="ck " style="top:373px;left:609px;">eth0 down:</div>
<div class="ck r " style="top:373px;left:568px;width:200px;">0B</div>
<div class="ck r " style="top:433px;left:577px;width:200px;color:#74c4f6;-webkit-text-stroke-color:#74c4f6;letter-spacing:0.6px">Used / Total</div>
<div class="ck " style="top:448px;left:609px;">RAM:</div>
<div class="ck r " style="top:448px;left:525px;width:200px;">115M</div>
<div class="ck r " style="top:448px;left:580px;width:200px;letter-spacing:0.6px">/ 1.96G</div>
<div class="ck " style="top:463px;left:609px;">Swap:</div>
<div class="ck r " style="top:463px;left:527px;width:200px;">0B</div>
<div class="ck r " style="top:463px;left:568px;width:200px;letter-spacing:0.6px">/ 0B</div>
<div class="ck " style="top:478px;left:609px;">/ Disk:</div>
<div class="ck r " style="top:478px;left:528px;width:200px;">2.11M</div>
<div class="ck r " style="top:478px;left:580px;width:200px;letter-spacing:0.6px">/ 1.53G</div>
<div class="gbox" style="top:213px"></div><div class="bar" style="left:756px;width:1px;top:226px;height:17px"></div><div class="bar" style="left:757px;width:1px;top:229px;height:14px"></div><div class="bar" style="left:760px;width:2px;top:241px;height:2px"></div><div class="bar" style="left:765px;width:1px;top:242px;height:1px"></div><div class="gbox" style="top:273px"></div><div class="bar" style="left:757px;width:4px;top:296px;height:7px"></div><div class="bar" style="left:761px;width:2px;top:295px;height:8px"></div><div class="bar" style="left:764px;width:1px;top:292px;height:11px"></div><div class="bar" style="left:765px;width:1px;top:274px;height:29px"></div><div class="bar" style="left:766px;width:1px;top:285px;height:18px"></div><div class="gbox" style="top:333px"></div><div class="bar" style="left:758px;width:2px;top:361px;height:2px"></div><div class="bar" style="left:762px;width:2px;top:360px;height:3px"></div><div class="bar" style="left:774px;width:1px;top:361px;height:2px"></div><div class="gbox" style="top:393px"></div>
<!-- taskbar -->
<div id="tb">
<div class="btn" style="left:0;width:63px"><div style="position:absolute;left:2px;top:3.5px;width:61px;text-align:center;font-size:18px;letter-spacing:1.85px;line-height:24px;color:#000">antiX</div></div>
<div class="btn" style="left:64px;width:27px"></div>
<div class="btn" style="left:96px;width:31px"></div>
<div class="btn" style="left:128px;width:31px"></div>
<div class="btn" style="left:160px;width:31px"></div>
<div class="btn" style="left:192px;width:31px"></div>
<svg class="a" style="left:0;top:0" width="230" height="33">
<!-- show desktop -->
<path d="M74.5 8.5 L80.5 8.5 L87.5 15.5 L87.5 19.5 L80.5 26.5 L74.5 26.5 L67.5 19.5 L67.5 15.5 Z" fill="#d8dadc"/>
<path d="M67 8 L73 8 L67 14 Z M88 8 L82 8 L88 14 Z M67 27 L73 27 L67 21 Z M88 27 L82 27 L88 21 Z" fill="#3a8e9a"/>
<!-- bag -->
<rect x="101" y="10" width="21" height="16" fill="#e2e2e2"/>
<rect x="101" y="10" width="1" height="16" fill="#888"/>
<rect x="121" y="10" width="1" height="12" fill="#888"/>
<rect x="101" y="25" width="14" height="1" fill="#888"/>
<rect x="107" y="7" width="9" height="3" fill="#d8d8d8"/>
<rect x="107" y="7" width="2" height="3" fill="#666"/>
<rect x="114" y="7" width="2" height="3" fill="#666"/>
<circle cx="118.1" cy="22.8" r="5.4" fill="#33a6dc"/>
<path d="M117 19 L119.2 19 L119.2 22 L121 22 L118.1 25 L115.2 22 L117 22 Z" fill="#fff"/>
<!-- eject -->
<rect x="136" y="7.2" width="16" height="19.8" rx="0.5" fill="#8a8a8a"/>
<path d="M144 11.2 L147.8 15.4 L140.2 15.4 Z" fill="#3c3c3c"/>
<rect x="140.2" y="17" width="7.6" height="1.6" fill="#3c3c3c"/>
<!-- cabinet -->
<rect x="167" y="7.2" width="18" height="2" fill="#4a88e0"/>
<rect x="167" y="9.1" width="18" height="2" fill="#7ed050"/>
<rect x="167" y="11" width="18" height="2.2" fill="#f8c850"/>
<rect x="166.2" y="13.2" width="19.6" height="13.8" rx="0.5" fill="#8c8c8c"/>
<rect x="172.2" y="18.6" width="7.3" height="1.7" rx="0.8" fill="#f4f4f4"/>
<!-- compass -->
<circle cx="208" cy="17" r="10" fill="#5866b8"/>
<path d="M198 17 A10 10 0 0 1 215.07 9.93 L200.93 24.07 A10 10 0 0 1 198 17 Z" fill="#7a88d0"/>
<path d="M215 10 L209.6 18.6 L206.6 15.8 Z" fill="#f03c30"/>
<path d="M201.3 23.4 L206.6 15.8 L209.6 18.6 Z" fill="#f4f4f4"/>
</svg>
<div class="ws" style="left:228px;width:43px;border-left:1px solid #7a7a7a;border-top:1px solid #7a7a7a;background:linear-gradient(180deg,#b0bce4 0,#d8def2 9px,#eef0f9 17px,#f2f4fa 27px,#b4c0e4 28px,#b4c0e4 31px,#f0f0f0 31px)"><div style="padding-top:5px">1</div></div>
<div class="ws" style="left:271px;width:43px;border-right:1px solid #6c6c6c;border-bottom:1px solid #6c6c6c;height:32px;background:linear-gradient(180deg,#f4f5fc 0,#e8eaf6 12px,#d4d9ef 20px,#b4bfe6 28px,#f2f4fa 28px)"><div style="padding-top:6px">2</div></div>
<svg class="a" style="left:600px;top:0" width="30" height="33">
<path d="M7.1 14.1 L9.8 14.1 L16.9 8.1 L16.9 25.4 L9.8 19.4 L7.1 19.4 Z" fill="#262626"/>
<path d="M20 13 A5.5 5.5 0 0 1 20 20.6" stroke="#262626" stroke-width="1.7" fill="none"/>
<path d="M23 10.2 A9.5 9.5 0 0 1 23 23.6" stroke="#262626" stroke-width="1.7" fill="none"/>
</svg>
<div class="a" style="left:634px;top:7px;width:20px;height:20px;background:#000"></div>
<div class="a" style="left:642px;top:7px;width:1px;height:2px;background:#22dd22"></div>
<div class="a" style="left:658px;top:7px;width:20px;height:20px;background:#000"></div>
<div class="a" style="left:658px;top:23px;width:20px;height:4px;background:#7a78f0"></div>
<div class="a" style="left:682px;top:7px;width:20px;height:20px;background:#000"></div>
<div class="a" style="left:705px;top:7px;width:96px;text-align:center;font-size:14px;letter-spacing:0.8px;line-height:18px;color:#000;white-space:pre">02:35:02 PM</div>
</div>
</body></html>
